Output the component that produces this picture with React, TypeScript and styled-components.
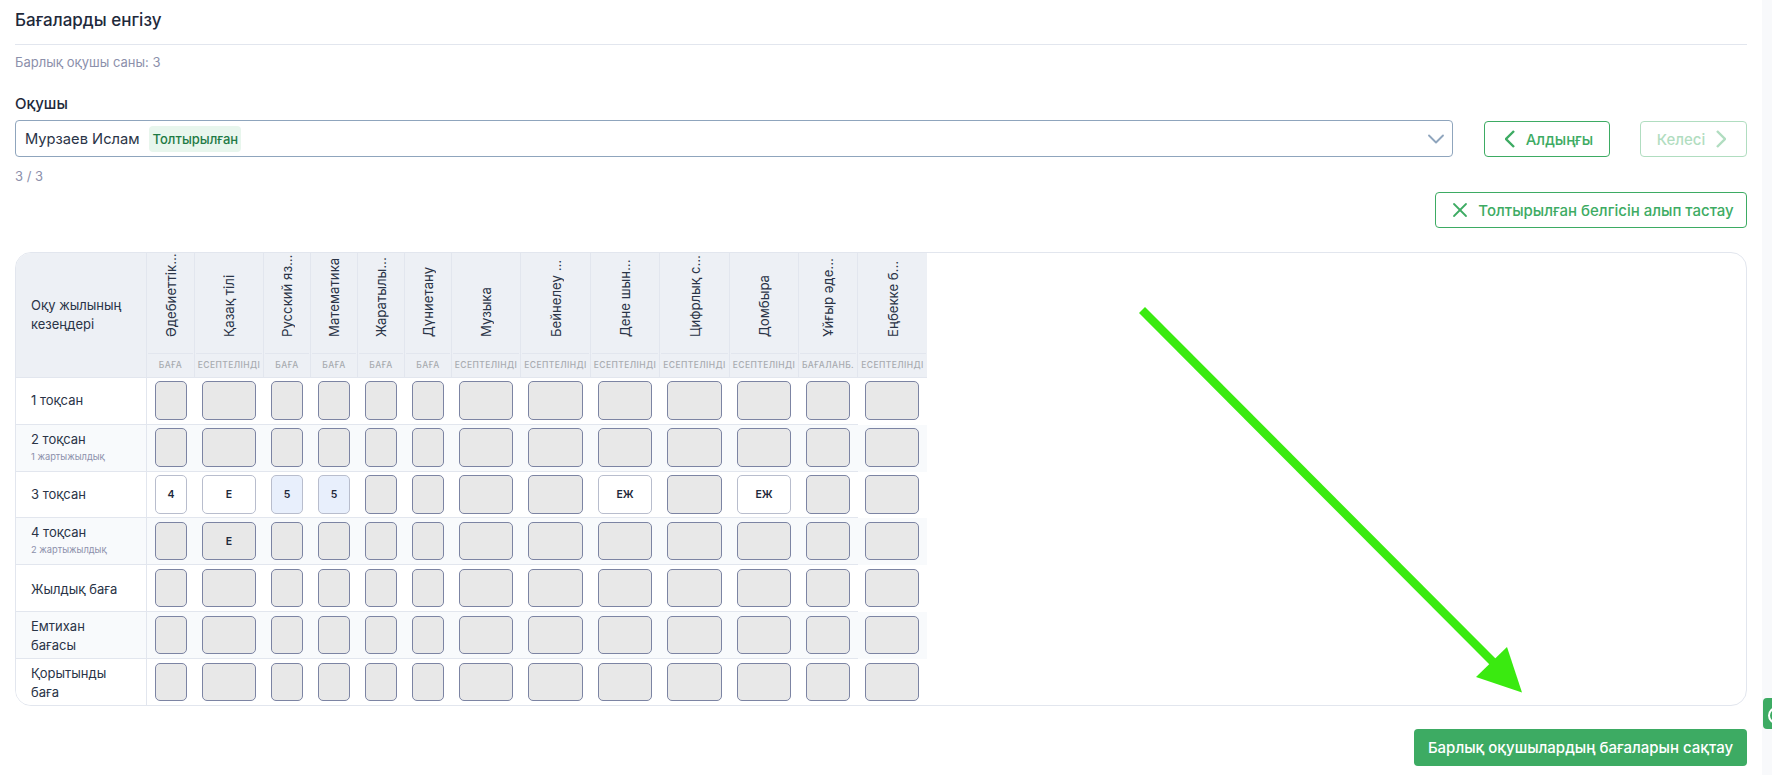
import React from 'react';
import styled, { createGlobalStyle } from 'styled-components';
import { ChevronDown, X } from 'lucide-react';

const GlobalStyle = createGlobalStyle`
  html, body {
    margin: 0;
    background: #fff;
    font-family: Inter, "Noto Sans", sans-serif;
    color: #1e293b;
  }
  * { box-sizing: border-box; }
`;

const Page = styled.div`
  position: relative;
  display: flex;
  width: 1772px;
  height: 775px;
  overflow: hidden;
`;

const Main = styled.main`
  width: 1762px;
  padding: 0 15px;
`;

const Strip = styled.aside`
  flex: 1;
  background: #f8f9fb;
`;

const SideTab = styled.div`
  position: absolute;
  right: 0;
  top: 698px;
  width: 9px;
  height: 31px;
  background: #3dab63;
  border-radius: 4px 0 0 4px;
  overflow: hidden;
  &::after {
    content: '';
    position: absolute;
    left: 5px;
    top: 9px;
    width: 13px;
    height: 13px;
    border: 2px solid #fff;
    border-radius: 50%;
  }
`;

const Title = styled.h1`
  margin: 0;
  height: 45px;
  padding-top: 10px;
  font-size: 17px;
  line-height: 20px;
  font-weight: 500;
  border-bottom: 1px solid #e2e6ee;
`;

const Muted = styled.div`
  font-size: 13px;
  line-height: 16px;
  color: #8c90ab;
`;

const Count = styled(Muted)`
  margin-top: 9px;
`;

const FieldLabel = styled.div`
  margin-top: 25px;
  font-size: 15px;
  line-height: 18px;
  font-weight: 500;
`;

const SelectRow = styled.div`
  display: flex;
  align-items: flex-start;
  margin-top: 7px;
`;

const Select = styled.div`
  flex: 1;
  height: 37px;
  display: flex;
  align-items: center;
  gap: 9px;
  padding: 0 9px;
  border: 1px solid #8fa5bd;
  border-radius: 4px;
  font-size: 14.7px;
`;

const SelectValue = styled.span`
  color: #2a3447;
`;

const Badge = styled.span`
  height: 26px;
  margin-top: 1px;
  padding: 0 3px 0 4px;
  display: flex;
  align-items: center;
  background: #e8f6ed;
  color: #1f7a45;
  border-radius: 4px;
  font-size: 13px;
  font-weight: 500;
`;

const Caret = styled.span`
  margin-left: auto;
  margin-right: -7px;
  display: flex;
  color: #8fa5bd;
`;

const NavGroup = styled.div`
  display: flex;
  gap: 30px;
  margin-left: 31px;
  margin-top: 1px;
`;

const OutlineButton = styled.button<{ $w: number; $gap?: number; $disabled?: boolean }>`
  width: ${p => p.$w}px;
  height: 36px;
  display: flex;
  align-items: center;
  justify-content: center;
  gap: ${p => p.$gap ?? 11}px;
  background: #fff;
  border: 1px solid #3dab63;
  border-radius: 4px;
  color: #3dab63;
  font-family: inherit;
  font-size: 15px;
  font-weight: 500;
  padding: 0;
  opacity: ${p => (p.$disabled ? 0.4 : 1)};
`;

const PrevButton = styled(OutlineButton)`
  padding-left: 4px;
`;

const NextButton = styled(OutlineButton)`
  padding-right: 4px;
`;

const Pager = styled(Muted)`
  margin-top: 11px;
`;

const ClearRow = styled.div`
  display: flex;
  justify-content: flex-end;
  margin-top: 8px;
`;

const Card = styled.div`
  margin-top: 24px;
  height: 454px;
  border: 1px solid #e2e6ee;
  border-radius: 16px;
  overflow: hidden;
`;

const Table = styled.table`
  border-collapse: separate;
  border-spacing: 0;
  table-layout: fixed;
  width: 911px;
`;

const CornerCell = styled.th`
  background: #edf0f5;
  border-right: 1px solid #e2e6ee;
  border-bottom: 1px solid #e2e6ee;
  padding: 0 20px 0 15px;
  text-align: left;
  font-size: 13px;
  line-height: 19px;
  font-weight: 400;
  color: #2a3447;
`;

const SubjectCell = styled.th`
  height: 100px;
  padding: 0;
  background: #edf0f5;
  border-right: 1px solid #e2e6ee;
  font-weight: 400;
  &:last-child { border-right: 0; }
`;

const SubjectName = styled.div`
  width: 100%;
  height: 100px;
  display: flex;
  align-items: center;
  justify-content: flex-start;
  writing-mode: vertical-rl;
  transform: rotate(180deg);
  padding-top: 16px;
  font-size: 13.2px;
  line-height: 16px;
  color: #2a3447;
  white-space: nowrap;
`;

const KindCell = styled.th`
  height: 25px;
  padding: 0;
  background: #edf0f5;
  border-right: 1px solid #e2e6ee;
  border-bottom: 1px solid #e2e6ee;
  font-weight: 500;
  font-size: 8.5px;
  letter-spacing: 0.4px;
  color: #a8abb0;
  white-space: nowrap;
  overflow: hidden;
  &:last-child { border-right: 0; }
`;

const KindInner = styled.div`
  margin: 0 1px;
  height: 24px;
  line-height: 23px;
  border-top: 1px solid #e2e6ee;
`;

const Row = styled.tr<{ $alt: boolean }>`
  background: ${p => (p.$alt ? '#f8fafc' : '#fff')};
`;

const PeriodCell = styled.td<{ $h: number; $lift: number }>`
  height: ${p => p.$h}px;
  padding: ${p => Math.max(-p.$lift, 0)}px 20px ${p => Math.max(p.$lift, 0)}px 15px;
  border-right: 1px solid #e2e6ee;
  border-bottom: 1px solid #e2e6ee;
  font-size: 13px;
  line-height: 19px;
  color: #2a3447;
`;

const PeriodNote = styled.div`
  font-size: 9.3px;
  line-height: 13px;
  margin-top: 1px;
  color: #8c90ab;
`;

const GradeCell = styled.td<{ $h: number; $top: number }>`
  height: ${p => p.$h}px;
  padding: ${p => p.$top}px 8px 0 7px;
  border-bottom: 1px solid #e2e6ee;
  vertical-align: top;
  &:nth-child(2) { padding-left: 8px; }
  &:last-child { border-bottom: 0; }
`;

type GradeTone = 'locked' | 'open' | 'marked';

const Grade = styled.div<{ $tone: GradeTone; $h: number }>`
  height: ${p => p.$h}px;
  display: flex;
  align-items: center;
  justify-content: center;
  border-radius: 5px;
  font-size: 10.5px;
  font-weight: 600;
  color: #1e293b;
  border: 1.5px solid ${p => (p.$tone === 'locked' ? '#7c84a3' : '#b8bdcd')};
  background: ${p => (p.$tone === 'locked' ? '#e8e8e8' : p.$tone === 'marked' ? '#e8effc' : '#fff')};
`;

const SaveRow = styled.div`
  display: flex;
  justify-content: flex-end;
  margin-top: 23px;
`;

const SaveButton = styled.button`
  width: 333px;
  height: 37px;
  background: #3dab63;
  color: #fff;
  border: 0;
  border-radius: 4px;
  font-family: inherit;
  font-size: 15px;
  font-weight: 500;
`;

const ArrowOverlay = styled.svg`
  position: absolute;
  left: 0;
  top: 0;
  pointer-events: none;
`;

const subjects = [
  { name: 'Әдебиеттік...', kind: 'БАҒА', w: 48 },
  { name: 'Қазақ тілі', kind: 'ЕСЕПТЕЛІНДІ', w: 69 },
  { name: 'Русский яз...', kind: 'БАҒА', w: 47 },
  { name: 'Математика', kind: 'БАҒА', w: 47 },
  { name: 'Жаратылы...', kind: 'БАҒА', w: 47 },
  { name: 'Дүниетану', kind: 'БАҒА', w: 47 },
  { name: 'Музыка', kind: 'ЕСЕПТЕЛІНДІ', w: 69 },
  { name: 'Бейнелеу ...', kind: 'ЕСЕПТЕЛІНДІ', w: 70 },
  { name: 'Дене шын...', kind: 'ЕСЕПТЕЛІНДІ', w: 69 },
  { name: 'Цифрлық с...', kind: 'ЕСЕПТЕЛІНДІ', w: 70 },
  { name: 'Домбыра', kind: 'ЕСЕПТЕЛІНДІ', w: 69 },
  { name: 'Ұйғыр әде...', kind: 'БАҒАЛАНБ.', w: 59 },
  { name: 'Еңбекке б...', kind: 'ЕСЕПТЕЛІНДІ', w: 69 },
];

interface Period {
  name: string;
  note?: string;
  rowH: number;
  top: number;
  gradeH: number;
  lift: number;
  values: Record<number, [string, GradeTone]>;
}

const periods: Period[] = [
  { name: '1 тоқсан', rowH: 47, top: 3, gradeH: 39, lift: 2, values: {} },
  { name: '2 тоқсан', note: '1 жартыжылдық', rowH: 47, top: 3, gradeH: 39, lift: 4, values: {} },
  {
    name: '3 тоқсан',
    rowH: 46,
    top: 3,
    gradeH: 39,
    lift: 0,
    values: {
      0: ['4', 'open'],
      1: ['Е', 'open'],
      2: ['5', 'marked'],
      3: ['5', 'marked'],
      8: ['ЕЖ', 'open'],
      10: ['ЕЖ', 'open'],
    },
  },
  { name: '4 тоқсан', note: '2 жартыжылдық', rowH: 47, top: 4, gradeH: 38, lift: 4, values: { 1: ['Е', 'locked'] } },
  { name: 'Жылдық баға', rowH: 47, top: 4, gradeH: 38, lift: -2, values: {} },
  { name: 'Емтихан бағасы', rowH: 47, top: 4, gradeH: 38, lift: -2, values: {} },
  { name: 'Қорытынды баға', rowH: 47, top: 4, gradeH: 38, lift: -2, values: {} },
];

function Chevron ({ flip }: { flip?: boolean }) {
  return (
    <svg width="10" height="18" viewBox="0 0 10 18" fill="none" stroke="currentColor" strokeWidth="2.4">
      <path d={flip ? 'M1 1l8 8-8 8' : 'M9 1L1 9l8 8'} />
    </svg>
  );
}

export default function App () {
  return (
    <Page>
      <GlobalStyle />
      <Main>
        <Title>Бағаларды енгізу</Title>
        <Count>Барлық оқушы саны: 3</Count>
        <FieldLabel>Оқушы</FieldLabel>
        <SelectRow>
          <Select>
            <SelectValue>Мурзаев Ислам</SelectValue>
            <Badge>Толтырылған</Badge>
            <Caret><ChevronDown size={28} strokeWidth={1.6} /></Caret>
          </Select>
          <NavGroup>
            <PrevButton $w={126}>
              <Chevron />
              Алдыңғы
            </PrevButton>
            <NextButton $w={107} $disabled>
              Келесі
              <Chevron flip />
            </NextButton>
          </NavGroup>
        </SelectRow>
        <Pager>3 / 3</Pager>
        <ClearRow>
          <OutlineButton $w={312} $gap={6}>
            <X size={24} strokeWidth={1.8} />
            Толтырылған белгісін алып тастау
          </OutlineButton>
        </ClearRow>
        <Card>
          <Table>
            <colgroup>
              <col style={{ width: 131 }} />
              {subjects.map(s => <col key={s.name} style={{ width: s.w }} />)}
            </colgroup>
            <thead>
              <tr>
                <CornerCell rowSpan={2}>Оқу жылының кезеңдері</CornerCell>
                {subjects.map(s => (
                  <SubjectCell key={s.name}><SubjectName>{s.name}</SubjectName></SubjectCell>
                ))}
              </tr>
              <tr>
                {subjects.map(s => (
                  <KindCell key={s.name}><KindInner>{s.kind}</KindInner></KindCell>
                ))}
              </tr>
            </thead>
            <tbody>
              {periods.map((p, i) => (
                <Row key={p.name} $alt={i % 2 === 1}>
                  <PeriodCell $h={p.rowH} $lift={p.lift}>
                    {p.name}
                    {p.note && <PeriodNote>{p.note}</PeriodNote>}
                  </PeriodCell>
                  {subjects.map((s, j) => {
                    const v = p.values[j];
                    return (
                      <GradeCell key={s.name} $h={p.rowH} $top={p.top}>
                        <Grade $tone={v ? v[1] : 'locked'} $h={p.gradeH}>{v ? v[0] : ''}</Grade>
                      </GradeCell>
                    );
                  })}
                </Row>
              ))}
            </tbody>
          </Table>
        </Card>
        <SaveRow>
          <SaveButton>Барлық оқушылардың бағаларын сақтау</SaveButton>
        </SaveRow>
      </Main>
      <Strip />
      <SideTab />
      <ArrowOverlay width="1772" height="775" viewBox="0 0 1772 775">
        <path d="M1142 310 L1495 664" stroke="#3aea10" strokeWidth="8.5" fill="none" />
        <path d="M1522 692.5 L1507 647 L1476 677 Z" fill="#3aea10" />
      </ArrowOverlay>
    </Page>
  );
}
